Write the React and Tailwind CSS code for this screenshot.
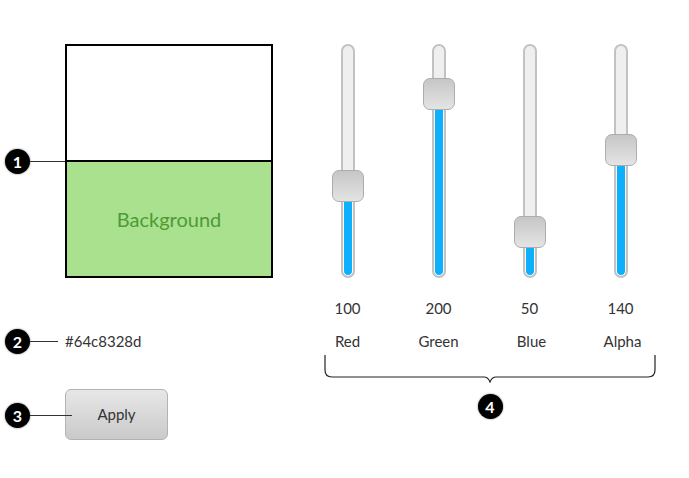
import React from 'react';

const channels = [
    { label: 'Red', value: 100 },
    { label: 'Green', value: 200 },
    { label: 'Blue', value: 50 },
    { label: 'Alpha', value: 140 },
];

const TRACK_H = 234;

function Badge({ n }) {
    return (
        <div className="w-[25px] h-[25px] rounded-full bg-black text-white flex items-center justify-center text-[16px] font-bold leading-none shadow-[0_0_2px_rgba(0,0,0,0.6)]">
            {n}
        </div>
    );
}

function Callout({ n, top, lineTo }) {
    return (
        <div className="absolute left-[5px] flex items-center" style={{ top }}>
            <Badge n={n} />
            <div className="h-px bg-[#333]" style={{ width: lineTo - 30 }} />
        </div>
    );
}

function VSlider({ value }) {
    const center = TRACK_H * (1 - value / 255);
    const fill = TRACK_H - center;
    return (
        <div className="relative w-[14px] h-[234px]">
            <div className="absolute inset-0 rounded-full border-2 border-[#c2c2c2] bg-[#efefef] overflow-hidden">
                <div className="absolute bottom-0 left-0 right-0 rounded-full border border-white bg-[#0db0fc]" style={{ height: fill }} />
            </div>
            <div
                className="absolute left-[-9px] w-[32px] h-[32px] rounded-[7px] border-[1.5px] border-[#adadad] bg-gradient-to-b from-[#c6c6c6] to-[#e4e4e4]"
                style={{ top: center - 16 }}
            />
        </div>
    );
}

export default function App() {
    return (
        <div className="relative w-[689px] h-[478px] bg-white text-[#333] font-['Lato','Open_Sans',sans-serif] flex">
            <div className="w-[302px] pl-[65px] pt-[44px] flex flex-col">
                <div className="w-[208px] h-[234px] border-2 border-black flex flex-col">
                    <div className="flex-1 bg-white" />
                    <div className="flex-1 border-t-2 border-black bg-[#a9e18e] flex items-center justify-center text-[20px] text-[#4f9a36]">
                        Background
                    </div>
                </div>
                <div className="mt-[53px] text-[15px] leading-[20px]">#64c8328d</div>
                <button className="mt-[38px] w-[103px] h-[51px] rounded-[6px] border border-[#b3b3b3] bg-gradient-to-b from-[#e7e7e7] to-[#cacaca] text-[15px] text-[#333]">
                    Apply
                </button>
            </div>

            <div className="pt-[44px] flex flex-col">
                <div className="flex">
                    {channels.map((c, i) => (
                        <div key={c.label} className="w-[91px] flex flex-col items-center">
                            <VSlider value={c.value} />
                            <div className="mt-[20px] text-[15px] leading-[20px]">{c.value}</div>
                            <div className={`mt-[13px] text-[15px] leading-[20px] ${i >= 2 ? 'pl-[4px]' : ''}`}>{c.label}</div>
                        </div>
                    ))}
                </div>
                <div className="ml-[22px] w-[332px] mt-[4px] flex flex-col items-center">
                    <svg width="332" height="28" viewBox="0 0 332 28" fill="none" stroke="#222" strokeWidth="1.2">
                        <path d="M1 0 V15 Q1 22 8 22 H160 Q164 22 166 27 Q168 22 172 22 H324 Q331 22 331 15 V0" />
                    </svg>
                    <div className="mt-[11px]"><Badge n={4} /></div>
                </div>
            </div>

            <Callout n={1} top={149} lineTo={65} />
            <Callout n={2} top={329} lineTo={58} />
            <Callout n={3} top={403} lineTo={72} />
        </div>
    );
}
